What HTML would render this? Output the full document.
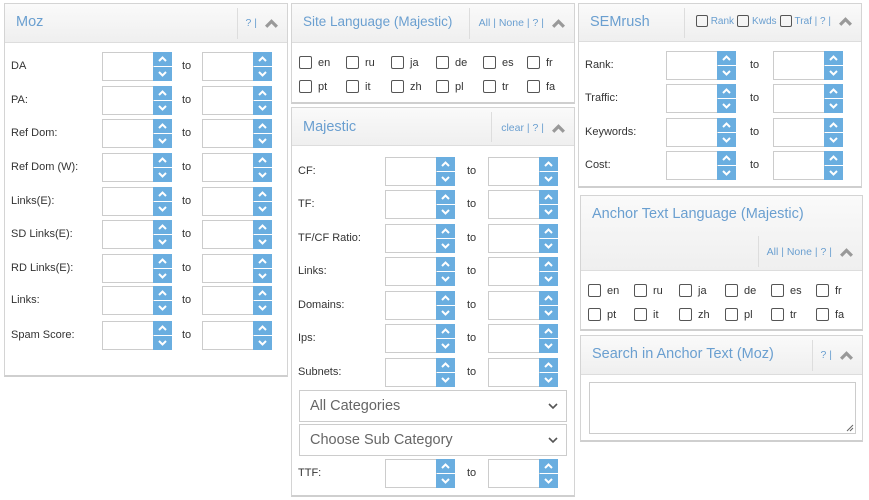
<!DOCTYPE html>
<html><head><meta charset="utf-8"><style>
*{box-sizing:border-box;margin:0;padding:0}
body{width:869px;height:500px;background:#fff;font-family:"Liberation Sans",sans-serif;font-size:11px;color:#333;position:relative;overflow:hidden}
.p{position:absolute;border:1px solid #d4d4d4;border-bottom:2px solid #cfcfcf;background:#fff}
.h{position:absolute;left:0;right:0;top:0;background:linear-gradient(#fafafa,#efefef);border-bottom:1px solid #ddd}
.t{position:absolute;left:11px;color:#6a9fd0;font-size:14.5px}
.lk{position:absolute;right:8px;color:#6a9fd0;font-size:10.5px;display:flex;align-items:center;gap:3px}
.sep{position:absolute;width:1px;background:#ddd}
.car{display:inline-block;width:15px;height:11px;margin-left:4px}
.r{position:absolute;left:0;right:0;height:29px}
.r .l{position:absolute;left:7px;top:8px}
.b{position:absolute;top:0;width:52px;height:29px;border:1px solid #ccc;background:#fff}
.s{position:absolute;top:0;width:19px;height:29px}
.s i{display:block;height:14px;background:#6aaee0;margin-bottom:1px;position:relative}
.s i svg{position:absolute;left:4px;top:3px}
.to{position:absolute;top:8px}
.cb{position:absolute;display:flex;align-items:center}
.cb span{width:13px;height:13px;border:1px solid #555;border-radius:2px;margin-right:6px}
.sel{position:absolute;left:7px;right:7px;height:32px;border:1px solid #ccc;color:#666;font-size:14.5px;padding:7px 10px}
.sel svg{position:absolute;right:8px;top:12px}
</style></head><body>

<div class="p" style="left:4px;top:3px;width:284px;height:374px">
 <div class="h" style="height:39px"><div class="t" style="top:10px">Moz</div><div class="sep" style="left:232px;top:4px;height:31px"></div>
 <div class="lk" style="top:13px">? | <svg class="car" viewBox="0 0 14 10"><path d="M2 8L7 3L12 8" stroke="#999" stroke-width="3" fill="none"/></svg></div></div>
</div>

<div class="p" style="left:291px;top:3px;width:284px;height:101px">
 <div class="h" style="height:39px"><div class="t" style="top:10px;font-size:13.5px">Site Language (Majestic)</div><div class="sep" style="left:177px;top:4px;height:31px"></div>
 <div class="lk" style="top:13px">All | None | ? | <svg class="car" viewBox="0 0 14 10"><path d="M2 8L7 3L12 8" stroke="#999" stroke-width="3" fill="none"/></svg></div></div>
</div>

<div class="p" style="left:291px;top:107px;width:284px;height:390px">
 <div class="h" style="height:38px"><div class="t" style="top:11px">Majestic</div><div class="sep" style="left:199px;top:4px;height:30px"></div>
 <div class="lk" style="top:14px">clear | ? | <svg class="car" viewBox="0 0 14 10"><path d="M2 8L7 3L12 8" stroke="#999" stroke-width="3" fill="none"/></svg></div></div>
 <div class="sel" style="top:282px">All Categories<svg width="10" height="7" viewBox="0 0 10 7"><path d="M1 1L5 5L9 1" stroke="#555" stroke-width="1.6" fill="none"/></svg></div>
 <div class="sel" style="top:316px">Choose Sub Category<svg width="10" height="7" viewBox="0 0 10 7"><path d="M1 1L5 5L9 1" stroke="#555" stroke-width="1.6" fill="none"/></svg></div>
</div>

<div class="p" style="left:578px;top:3px;width:284px;height:185px">
 <div class="h" style="height:38px"><div class="t" style="top:10px">SEMrush</div><div class="sep" style="left:105px;top:4px;height:30px"></div>
 <div class="lk" style="top:11px;font-size:10px"><span style="width:12px;height:12px;border:1px solid #555;border-radius:2px"></span>Rank <span style="width:12px;height:12px;border:1px solid #555;border-radius:2px"></span>Kwds <span style="width:12px;height:12px;border:1px solid #555;border-radius:2px"></span>Traf | ? | <svg class="car" viewBox="0 0 14 10"><path d="M2 8L7 3L12 8" stroke="#999" stroke-width="3" fill="none"/></svg></div></div>
</div>

<div class="p" style="left:580px;top:195px;width:283px;height:136px">
 <div class="h" style="height:75px"><div class="t" style="top:10px">Anchor Text Language (Majestic)</div><div class="sep" style="left:177px;top:40px;height:31px"></div>
 <div class="lk" style="top:50px">All | None | ? | <svg class="car" viewBox="0 0 14 10"><path d="M2 8L7 3L12 8" stroke="#999" stroke-width="3" fill="none"/></svg></div></div>
</div>

<div class="p" style="left:580px;top:335px;width:283px;height:107px">
 <div class="h" style="height:39px"><div class="t" style="top:10px">Search in Anchor Text (Moz)</div><div class="sep" style="left:231px;top:4px;height:31px"></div>
 <div class="lk" style="top:13px">? | <svg class="car" viewBox="0 0 14 10"><path d="M2 8L7 3L12 8" stroke="#999" stroke-width="3" fill="none"/></svg></div></div>
 <div style="position:absolute;left:8px;top:46px;width:267px;height:52px;border:1px solid #ccc"><svg style="position:absolute;right:1px;bottom:1px" width="8" height="8"><path d="M1 7L7 1M4 7L7 4" stroke="#666"/></svg></div>
</div>

<div id="rows"></div>

<script>
var up='<i><svg width="11" height="8"><path d="M2 6L5.5 2.5L9 6" stroke="#fff" stroke-width="2" fill="none"/></svg></i><i><svg width="11" height="8"><path d="M2 2L5.5 5.5L9 2" stroke="#fff" stroke-width="2" fill="none"/></svg></i>';
function rows(left,w,o,items){var h='';items.forEach(function(it){h+='<div class="r" style="top:'+(it[1]+2)+'px"><span class="l">'+it[0]+'</span><div class="b" style="left:'+o[0]+'px"></div><div class="s" style="left:'+(o[0]+51)+'px">'+up+'</div><span class="to" style="left:'+o[1]+'px">to</span><div class="b" style="left:'+o[2]+'px"></div><div class="s" style="left:'+(o[2]+51)+'px">'+up+'</div></div>';});
return '<div style="position:absolute;left:'+left+'px;width:'+w+'px;top:0">'+h+'</div>';}
function cbs(x,y,dx,labs){var h='';labs.forEach(function(l,i){h+='<div class="cb" style="left:'+(x+dx[i%6])+'px;top:'+(y+Math.floor(i/6)*24)+'px"><span></span>'+l+'</div>';});return h;}
var H='';
H+=rows(4,284,[98,178,198],[['DA',50],['PA:',84],['Ref Dom:',117],['Ref Dom (W):',151],['Links(E):',185],['SD Links(E):',218],['RD Links(E):',252],['Links:',284],['Spam Score:',319]]);
H+=rows(291,284,[94,176,197],[['CF:',155],['TF:',188],['TF/CF Ratio:',222],['Links:',255],['Domains:',289],['Ips:',322],['Subnets:',356],['TTF:',457]]);
H+=rows(578,284,[88,172,195],[['Rank:',49],['Traffic:',82],['Keywords:',116],['Cost:',149]]);
var L=['en','ru','ja','de','es','fr','pt','it','zh','pl','tr','fa'],D=[0,47,92,137,184,228];
H+=cbs(299,56,D,L);H+=cbs(588,284,[0,46,91,137,183,228],L);
document.getElementById('rows').innerHTML=H;
</script>
</body></html>
